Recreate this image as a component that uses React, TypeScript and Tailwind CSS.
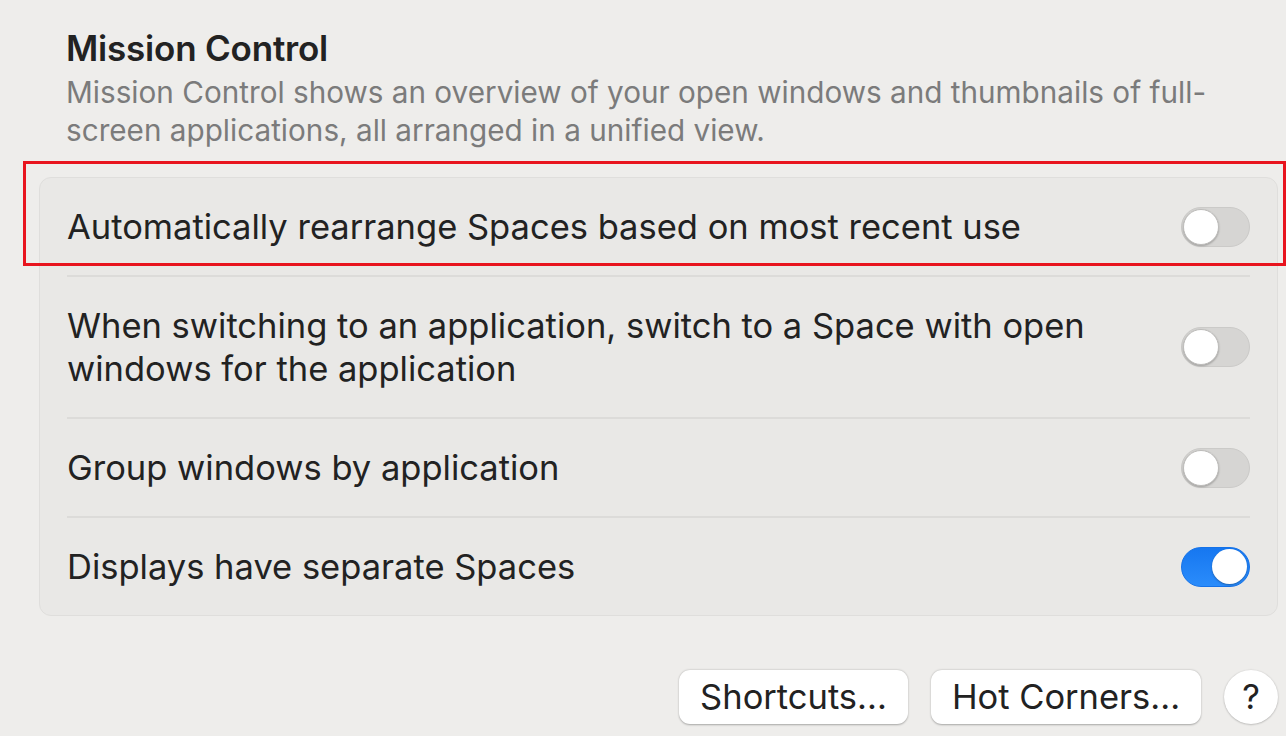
import React from 'react';

type Row = { label: React.ReactNode; on: boolean };

const rows: Row[] = [
  { label: 'Automatically rearrange Spaces based on most recent use', on: false },
  {
    label: (
      <>
        When switching to an application, switch to a Space with open
        <br />
        windows for the application
      </>
    ),
    on: false,
  },
  { label: 'Group windows by application', on: false },
  { label: 'Displays have separate Spaces', on: true },
];

function Toggle({ on }: { on: boolean }) {
  if (on) {
    return (
      <div className="flex h-[40px] w-[69px] shrink-0 items-center justify-end rounded-full border border-[#1572e8] bg-gradient-to-b from-[#1677f0] to-[#2a8cfb] px-[2px]">
        <div className="h-[35px] w-[35px] rounded-full bg-white shadow-[0_1px_2px_rgba(0,0,0,0.3)]" />
      </div>
    );
  }
  return (
    <div className="flex h-[40px] w-[69px] shrink-0 items-center rounded-full border border-[#cbcac8] bg-[#d6d5d3] px-[1px]">
      <div className="h-[36px] w-[36px] rounded-full border border-[#bdbcba] bg-white shadow-[0_1px_2px_rgba(0,0,0,0.25)]" />
    </div>
  );
}

export default function App() {
  return (
    <div
      className="relative h-[736px] w-[1286px] overflow-hidden bg-[#eeedeb] text-[#1f1f1f]"
      style={{ fontFamily: 'Inter, "Liberation Sans", sans-serif' }}
    >
      <div className="pl-[39px] pr-[8px] pt-[26px]">
        <div className="pl-[27px]">
          <h1 className="text-[35px] font-semibold leading-[44px] tracking-[-0.2px] text-[#222]">Mission Control</h1>
          <p className="mt-[3px] text-[29.7px] leading-[38px] text-[#7b7b7b]">
            Mission Control shows an overview of your open windows and thumbnails of full-
            <br />
            screen applications, all arranged in a unified view.
          </p>
        </div>

        <div className="mt-[28px] rounded-[12px] border border-[#dfdedc] bg-[#e9e8e6]">
          {rows.map((r, i) => (
            <div key={i} className={i > 0 ? 'mx-[27px] border-t-2 border-[#dcdbd9]' : 'mx-[27px]'}>
              <div className="flex items-center justify-between py-[27px]">
                <div className="text-[34.5px] leading-[43px] text-[#222]">{r.label}</div>
                <Toggle on={r.on} />
              </div>
            </div>
          ))}
        </div>

        <div className="mt-[54px] flex justify-end gap-[23px]">
          <button className="h-[54px] w-[229px] rounded-[11px] bg-white text-[34.5px] text-[#222] shadow-[0_0.5px_2px_rgba(0,0,0,0.3)]">
            Shortcuts...
          </button>
          <button className="h-[54px] w-[270px] rounded-[11px] bg-white text-[34.5px] text-[#222] shadow-[0_0.5px_2px_rgba(0,0,0,0.3)]">
            Hot Corners...
          </button>
          <button className="h-[54px] w-[54px] rounded-full bg-white text-[34.5px] text-[#222] shadow-[0_0.5px_2px_rgba(0,0,0,0.3)]">
            ?
          </button>
        </div>
      </div>

      <div className="pointer-events-none absolute left-[23px] top-[161px] h-[105px] w-[1263px] border-[3px] border-[#e8141e]" />
    </div>
  );
}
